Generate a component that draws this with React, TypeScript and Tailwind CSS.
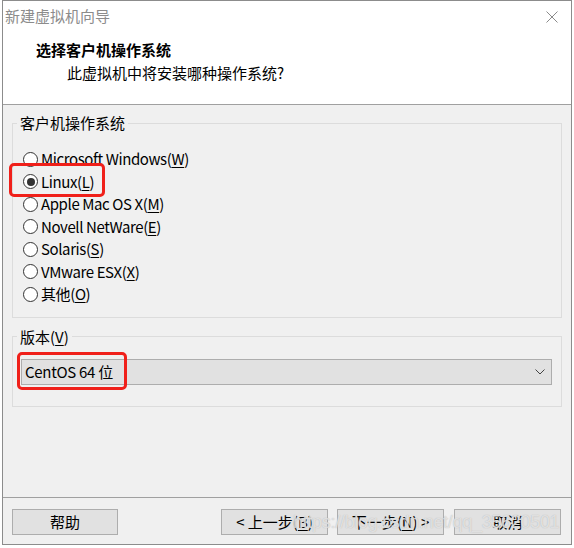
import { useState } from "react";

const options = [
  { label: "Microsoft Windows", key: "W" },
  { label: "Linux", key: "L" },
  { label: "Apple Mac OS X", key: "M" },
  { label: "Novell NetWare", key: "E" },
  { label: "Solaris", key: "S" },
  { label: "VMware ESX", key: "X" },
  { label: "其他", key: "O" },
];

function Mnemonic({ k }: { k: string }) {
  return (
    <>
      (<span className="underline underline-offset-[2px] decoration-1">{k}</span>)
    </>
  );
}

function Radio({ checked }: { checked: boolean }) {
  return (
    <span className="w-[15px] h-[15px] rounded-full border border-[#333333] bg-white flex items-center justify-center shrink-0">
      {checked && <span className="w-[8px] h-[8px] rounded-full bg-[#333333]" />}
    </span>
  );
}

function Button({ children, className }: { children: React.ReactNode; className?: string }) {
  return (
    <button
      type="button"
      className={`h-[26px] bg-[#e1e1e1] border border-[#adadad] text-[15px] leading-[20px] text-black flex items-center justify-center ${className ?? ""}`}
    >
      {children}
    </button>
  );
}

export default function App() {
  const [selected, setSelected] = useState("L");

  return (
    <div className="relative w-[574px] h-[548px] bg-white font-['Noto_Sans_CJK_SC',sans-serif] text-[15px] text-black overflow-hidden">
      <div className="ml-[2px] w-[570px] h-[545px] border border-[#8c8c8c] flex flex-col bg-[#f0f0f0]">
        {/* header */}
        <div className="h-[103px] bg-white border-b border-[#a0a0a0] box-content">
          <div className="h-[30px] flex items-center justify-between pl-[2px] pr-[13px]">
            <span className="text-[#8c8c8c] leading-[20px]">新建虚拟机向导</span>
            <svg width="12" height="12" viewBox="0 0 12 12" className="mt-[2px]">
              <path d="M0.5 0.5 L11.5 11.5 M11.5 0.5 L0.5 11.5" stroke="#8a8a8a" strokeWidth="1" />
            </svg>
          </div>
          <div className="pl-[33px] mt-[9px] font-bold leading-[20px]">选择客户机操作系统</div>
          <div className="pl-[64px] mt-[3px] leading-[20px]">此虚拟机中将安装哪种操作系统?</div>
        </div>

        {/* body */}
        <div className="h-[392px] border-b border-[#a0a0a0] box-content px-[9px]">
          <fieldset className="mt-[8px] border border-[#dcdcdc] pl-[10px] pt-[15px] pb-[11px]">
            <legend className="ml-[-6px] px-[3px] leading-[20px]">客户机操作系统</legend>
            {options.map((o) => (
              <label
                key={o.key}
                className="h-[22.5px] flex items-center gap-[3px] leading-[20px]"
                onClick={() => setSelected(o.key)}
              >
                <Radio checked={selected === o.key} />
                <span className="tracking-[-0.4px]">
                  {o.label}
                  <Mnemonic k={o.key} />
                </span>
              </label>
            ))}
          </fieldset>

          <fieldset className="mt-[9px] border border-[#dcdcdc] pl-[8px] pr-[9px] pt-[12px] pb-[21px]">
            <legend className="ml-[-4px] px-[3px] leading-[20px]">
              版本<Mnemonic k="V" />
            </legend>
            <div className="h-[26px] bg-[#e1e1e1] border border-[#adadad] flex items-center justify-between pl-[3px] pr-[6px]">
              <span className="leading-[20px] tracking-[-0.3px]">CentOS 64 位</span>
              <svg width="10" height="6" viewBox="0 0 10 6">
                <path d="M0.5 0.5 L5 5 L9.5 0.5" fill="none" stroke="#444" strokeWidth="1" />
              </svg>
            </div>
          </fieldset>
        </div>

        {/* footer */}
        <div className="flex-1 flex items-start justify-between pt-[11px] pl-[9px] pr-[10px]">
          <Button className="w-[106px]">帮助</Button>
          <div className="flex gap-[9px]">
            <Button className="w-[107px]">
              &lt;&nbsp;上一步<Mnemonic k="B" />
            </Button>
            <Button className="w-[107px]">
              下一步<Mnemonic k="N" />&nbsp;&gt;
            </Button>
            <Button className="w-[107px] ml-[1px]">取消</Button>
          </div>
        </div>
      </div>

      {/* annotations */}
      <div className="absolute left-[9px] top-[163px] w-[96px] h-[34px] border-[3px] border-[#f0201a] rounded-[5px]" />
      <div className="absolute left-[17px] top-[352px] w-[110px] h-[38px] border-[3px] border-[#f0201a] rounded-[5px]" />

      {/* watermark */}
      <div className="absolute left-[293px] top-[510px] text-[18px] leading-[24px] font-['Liberation_Sans',sans-serif] text-white/60 [text-shadow:0_0_1px_#aaaaaa] tracking-[-0.3px] pointer-events-none">
        https://blog.csdn.net/qq_35620501
      </div>
    </div>
  );
}
